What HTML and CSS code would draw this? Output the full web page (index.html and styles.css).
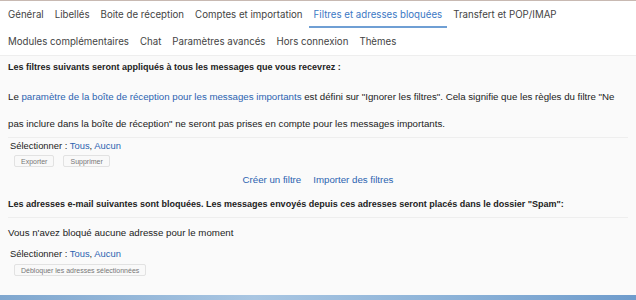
FILE: index.html
```html
<!DOCTYPE html>
<html lang="fr">
<head>
    <meta charset="UTF-8">
    <meta name="viewport" content="width=device-width, initial-scale=1.0">
    <title>Paramètres - Filtres</title>
    <link rel="stylesheet" href="styles.css">
</head>
<body>
    <!-- Settings tabs -->
    <nav class="tabs">
        <a class="tab">Général</a>
        <a class="tab">Libellés</a>
        <a class="tab">Boite de réception</a>
        <a class="tab">Comptes et importation</a>
        <a class="tab active">Filtres et adresses bloquées</a>
        <a class="tab">Transfert et POP/IMAP</a>
        <a class="tab">Modules complémentaires</a>
        <a class="tab">Chat</a>
        <a class="tab">Paramètres avancés</a>
        <a class="tab">Hors connexion</a>
        <a class="tab">Thèmes</a>
    </nav>

    <!-- Filters section -->
    <main class="content">
        <h3 class="section-title">Les filtres suivants seront appliqués à tous les messages que vous recevrez :</h3>
        <p class="notice">Le <a class="link">paramètre de la boîte de réception pour les messages importants</a> est défini sur "Ignorer les filtres". Cela signifie que les règles du filtre "Ne pas inclure dans la boîte de réception" ne seront pas prises en compte pour les messages importants.</p>

        <div class="select-line">Sélectionner : <a class="link">Tous</a>, <a class="link">Aucun</a></div>
        <div class="btn-row">
            <button class="small-btn">Exporter</button>
            <button class="small-btn">Supprimer</button>
        </div>
        <div class="filter-actions">
            <a class="link">Créer un filtre</a>
            <a class="link">Importer des filtres</a>
        </div>

        <!-- Blocked addresses -->
        <h3 class="section-title blocked-title">Les adresses e-mail suivantes sont bloquées. Les messages envoyés depuis ces adresses seront placés dans le dossier "Spam":</h3>
        <p class="empty">Vous n'avez bloqué aucune adresse pour le moment</p>
        <div class="select-line second">Sélectionner : <a class="link">Tous</a>, <a class="link">Aucun</a></div>
        <div class="btn-row second">
            <button class="small-btn">Débloquer les adresses sélectionnées</button>
        </div>
    </main>

    <div class="desktop-strip"></div>
</body>
</html>
```

FILE: styles.css
```css
/* Basic reset */
* {
    margin: 0;
    padding: 0;
    box-sizing: border-box;
}
body {
    display: flex;
    flex-direction: column;
    height: 300px;
    overflow: hidden;
    font-family: "Liberation Sans", Arial, sans-serif;
    color: #222;
    background: #fafafa;
    border-top: 1px solid #c8b9b2;
}
a {
    cursor: pointer;
}
/* Tabs */
.tabs {
    display: flex;
    flex-wrap: wrap;
    column-gap: 1px;
    padding: 0 3px;
    background: #fff;
    border-bottom: 1px solid #eee;
    font-family: Inter, "Open Sans", sans-serif;
    font-size: 9.7px;
}
.tab {
    padding: 2px 5px 0;
    height: 27px;
    line-height: 23px;
    color: #444;
    border-bottom: 2px solid transparent;
}
.tab.active {
    color: #3b78c4;
    border-bottom-color: #6f9fd4;
}
/* Content */
.content {
    flex: 1;
    padding: 0 8px;
    font-size: 9.7px;
}
.link {
    color: #2c63b0;
}
.section-title {
    font-size: 9px;
    font-weight: bold;
    line-height: 22px;
}
.notice {
    margin-top: 5px;
    line-height: 27px;
    border-bottom: 1px solid #eeeeee;
}
.select-line {
    padding-left: 2px;
    font-size: 9.4px;
    line-height: 16px;
}
.btn-row {
    display: flex;
    gap: 9px;
    padding-left: 6px;
    margin-top: 1px;
}
.small-btn {
    height: 12px;
    padding: 0 6px;
    font-family: "Liberation Sans", Arial, sans-serif;
    font-size: 7px;
    color: #777;
    background: #f9f9f9;
    border: 1px solid #e2e2e2;
    border-radius: 2px;
}
.filter-actions {
    display: flex;
    justify-content: center;
    gap: 12px;
    margin-top: 6px;
    line-height: 14px;
}
.blocked-title {
    margin-top: 6px;
    padding-bottom: 2px;
    border-bottom: 1px solid #eeeeee;
}
.empty {
    line-height: 30px;
}
.select-line.second {
    line-height: 12px;
}
.btn-row.second {
    margin-top: 4px;
}
/* Desktop wallpaper peeking under the window */
.desktop-strip {
    height: 5px;
    background: linear-gradient(90deg, #7fa7cf, #a9c6e2 40%, #8db3d8 70%, #6f9ccc);
}
```
